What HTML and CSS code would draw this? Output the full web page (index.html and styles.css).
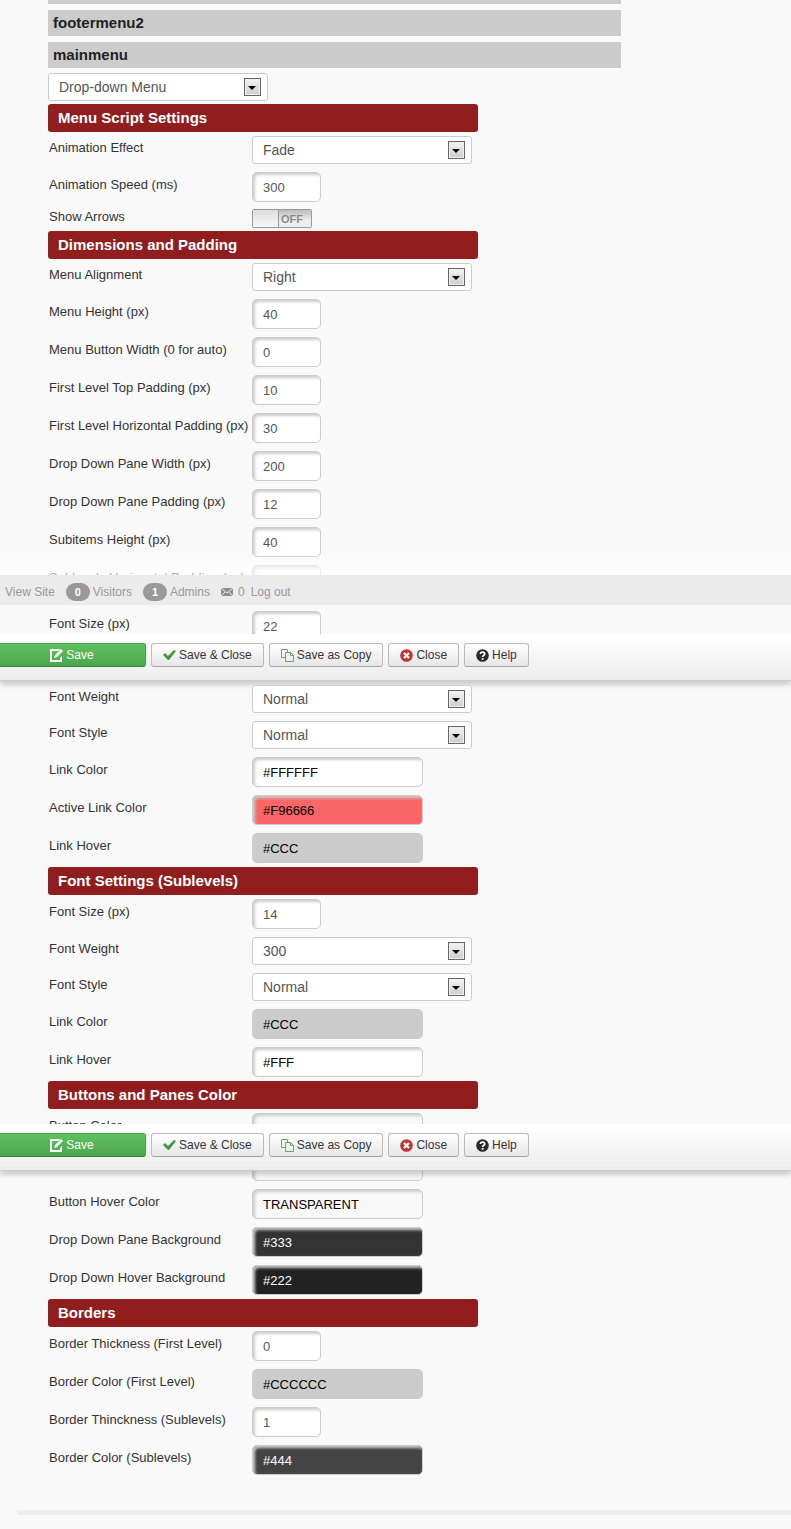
FILE: index.html
```
<!DOCTYPE html>
<html lang="en">
<head>
    <meta charset="UTF-8">
    <meta name="viewport" content="width=device-width, initial-scale=1.0">
    <title>Template Menu Settings</title>
    <link rel="stylesheet" href="styles.css">
</head>
<body>
    <!-- Icons shared by the toolbars -->
    <svg class="sprite" aria-hidden="true">
        <symbol id="icon-save" viewBox="0 0 13 13">
            <path d="M10 0H0v13h12V7l-2 2v2H2V2h6z" fill="#fff"/>
            <path d="M11 0l2 2-6 6-3 1 1-3z" fill="#fff"/>
        </symbol>
        <symbol id="icon-check" viewBox="0 0 13 13">
            <path d="M0 6l2-2 3 3 6-6 2 1-7 9H5z" fill="#409740"/>
        </symbol>
        <symbol id="icon-copy" viewBox="0 0 13 13">
            <path d="M4.500 8.500H.5v-8h6v3M4.500 3.500h5l3 3v6h-8zM9.500 3.500v3h3" fill="none" stroke="#5fae5f"/>
        </symbol>
        <symbol id="icon-close" viewBox="0 0 13 13">
            <circle cx="6.500" cy="6.500" r="6.300" fill="#bd362f"/>
            <path d="M4 4l5 5M9 4l-5 5" stroke="#fff" stroke-width="2.200"/>
        </symbol>
        <symbol id="icon-help" viewBox="0 0 13 13">
            <circle cx="6.500" cy="6.500" r="6.300" fill="#2a2a2a"/>
            <path d="M4.400 4.900C4.400 2.400 8.700 2.400 8.700 4.900 8.700 6.300 6.600 6.200 6.600 8M6.600 9v1.800" fill="none" stroke="#fff" stroke-width="1.700"/>
        </symbol>
    </svg>

    <!-- Menus -->
    <div class="pane">
        <div class="menu-list">
            <div class="menu-name menu-end"></div>
            <h2 class="menu-name">footermenu2</h2>
            <h2 class="menu-name">mainmenu</h2>
        </div>
        <span class="select"><select aria-label="Menu type"><option>Drop-down Menu</option></select></span>

        <h3 class="heading">Menu Script Settings</h3>
        <div class="row">
            <label for="effect">Animation Effect</label>
            <span class="select"><select id="effect"><option>Fade</option></select></span>
        </div>
        <div class="row text-row">
            <label for="speed">Animation Speed (ms)</label>
            <input type="text" id="speed" value="300">
        </div>
        <div class="row switch-row">
            <label for="arrows">Show Arrows</label>
            <span class="switch"><input type="checkbox" id="arrows"><span class="off">OFF</span></span>
        </div>

        <h3 class="heading">Dimensions and Padding</h3>
        <div class="row">
            <label for="align">Menu Alignment</label>
            <span class="select"><select id="align"><option>Right</option></select></span>
        </div>
        <div class="row text-row">
            <label for="height">Menu Height (px)</label>
            <input type="text" id="height" value="40">
        </div>
        <div class="row text-row">
            <label for="width">Menu Button Width (0 for auto)</label>
            <input type="text" id="width" value="0">
        </div>
        <div class="row text-row">
            <label for="top-pad">First Level Top Padding (px)</label>
            <input type="text" id="top-pad" value="10">
        </div>
        <div class="row text-row">
            <label for="hor-pad">First Level Horizontal Padding (px)</label>
            <input type="text" id="hor-pad" value="30">
        </div>
        <div class="row text-row">
            <label for="pane-width">Drop Down Pane Width (px)</label>
            <input type="text" id="pane-width" value="200">
        </div>
        <div class="row text-row">
            <label for="pane-pad">Drop Down Pane Padding (px)</label>
            <input type="text" id="pane-pad" value="12">
        </div>
        <div class="row text-row">
            <label for="sub-height">Subitems Height (px)</label>
            <input type="text" id="sub-height" value="40">
        </div>
        <div class="row text-row cut">
            <label for="sub-pad">Sublevels Horizontal Padding (px)</label>
            <input type="text" id="sub-pad" value="">
        </div>
    </div>

    <!-- Status bar -->
    <div class="status">
        <a href="#">View Site</a>
        <span class="count"><b class="badge">0</b>Visitors</span>
        <span class="count"><b class="badge">1</b>Admins</span>
        <a href="#" class="mail">
            <svg width="12" height="8" viewBox="0 0 12 8"><path d="M0 0h12v8H0z" fill="#8f8f8f"/><path d="M0 0l6 5 6-5M0 8l4-4M12 8L8 4" fill="none" stroke="#ebebeb"/></svg>
            0</a>
        <a href="#">Log out</a>
    </div>

    <div class="pane pane-size">
        <div class="row text-row cut cut-size">
            <label for="size1">Font Size (px)</label>
            <input type="text" id="size1" value="22">
        </div>
    </div>

    <!-- Toolbar -->
    <div class="toolbar">
        <button class="btn btn-save"><svg><use href="#icon-save"/></svg>Save</button>
        <button class="btn"><svg><use href="#icon-check"/></svg>Save &amp; Close</button>
        <button class="btn"><svg><use href="#icon-copy"/></svg>Save as Copy</button>
        <button class="btn"><svg><use href="#icon-close"/></svg>Close</button>
        <button class="btn"><svg><use href="#icon-help"/></svg>Help</button>
    </div>

    <!-- Fonts -->
    <div class="pane">
        <div class="row">
            <label for="weight1">Font Weight</label>
            <span class="select"><select id="weight1"><option>Normal</option></select></span>
        </div>
        <div class="row">
            <label for="style1">Font Style</label>
            <span class="select"><select id="style1"><option>Normal</option></select></span>
        </div>
        <div class="row text-row">
            <label for="link1">Link Color</label>
            <input type="text" id="link1" class="color white" value="#FFFFFF">
        </div>
        <div class="row text-row">
            <label for="active1">Active Link Color</label>
            <input type="text" id="active1" class="color red" value="#F96666">
        </div>
        <div class="row text-row">
            <label for="hover1">Link Hover</label>
            <input type="text" id="hover1" class="color gray" value="#CCC">
        </div>

        <h3 class="heading">Font Settings (Sublevels)</h3>
        <div class="row text-row">
            <label for="size2">Font Size (px)</label>
            <input type="text" id="size2" value="14">
        </div>
        <div class="row">
            <label for="weight2">Font Weight</label>
            <span class="select"><select id="weight2"><option>300</option></select></span>
        </div>
        <div class="row">
            <label for="style2">Font Style</label>
            <span class="select"><select id="style2"><option>Normal</option></select></span>
        </div>
        <div class="row text-row">
            <label for="link2">Link Color</label>
            <input type="text" id="link2" class="color gray" value="#CCC">
        </div>
        <div class="row text-row">
            <label for="hover2">Link Hover</label>
            <input type="text" id="hover2" class="color white" value="#FFF">
        </div>

        <h3 class="heading">Buttons and Panes Color</h3>
        <div class="row text-row cut cut-color">
            <label for="button-color">Button Color</label>
            <input type="text" id="button-color" class="color" value="TRANSPARENT">
        </div>
    </div>

    <!-- Toolbar -->
    <div class="toolbar">
        <button class="btn btn-save"><svg><use href="#icon-save"/></svg>Save</button>
        <button class="btn"><svg><use href="#icon-check"/></svg>Save &amp; Close</button>
        <button class="btn"><svg><use href="#icon-copy"/></svg>Save as Copy</button>
        <button class="btn"><svg><use href="#icon-close"/></svg>Close</button>
        <button class="btn"><svg><use href="#icon-help"/></svg>Help</button>
    </div>

    <!-- Panes and borders -->
    <div class="pane">
        <div class="row cut cut-top">
            <span></span>
            <input type="text" class="color" aria-label="Button color" value="">
        </div>
        <div class="row text-row">
            <label for="button-hover">Button Hover Color</label>
            <input type="text" id="button-hover" class="color" value="TRANSPARENT">
        </div>
        <div class="row text-row">
            <label for="pane-bg">Drop Down Pane Background</label>
            <input type="text" id="pane-bg" class="color dark" value="#333">
        </div>
        <div class="row text-row">
            <label for="hover-bg">Drop Down Hover Background</label>
            <input type="text" id="hover-bg" class="color darker" value="#222">
        </div>

        <h3 class="heading">Borders</h3>
        <div class="row text-row">
            <label for="border1">Border Thickness (First Level)</label>
            <input type="text" id="border1" value="0">
        </div>
        <div class="row text-row">
            <label for="border-color1">Border Color (First Level)</label>
            <input type="text" id="border-color1" class="color gray" value="#CCCCCC">
        </div>
        <div class="row text-row">
            <label for="border2">Border Thinckness (Sublevels)</label>
            <input type="text" id="border2" value="1">
        </div>
        <div class="row text-row">
            <label for="border-color2">Border Color (Sublevels)</label>
            <input type="text" id="border-color2" class="color charcoal" value="#444">
        </div>
    </div>
    <hr>
</body>
</html>
```
FILE: styles.css
```
*,
*::before,
*::after {
    box-sizing: border-box;
}
body {
    margin: 0;
    background: #f9f9f9;
    color: #333;
    font-family: "Liberation Sans", Arial, sans-serif;
    font-size: 13px;
    overflow-x: hidden;
}
.sprite {
    display: none;
}
a {
    color: inherit;
    text-decoration: none;
}
.pane {
    padding-left: 48px;
}

/* Menu names */
.menu-list {
    display: flex;
    flex-direction: column;
    gap: 6px;
    max-width: 573px;
    margin-bottom: 5px;
}
.menu-name {
    margin: 0;
    padding-left: 5px;
    background: #ccc;
    color: #222;
    font-size: 15px;
    line-height: 26px;
}
.menu-end {
    height: 4px;
}
.heading {
    max-width: 430px;
    margin: 0;
    padding-left: 10px;
    border-radius: 3px;
    background: #901e1e;
    color: #fff;
    font-size: 15px;
    line-height: 28px;
}
.menu-list + .select {
    margin-bottom: 3px;
}

/* Form rows */
.row {
    display: grid;
    grid-template-columns: 204px 1fr;
    align-items: start;
    padding: 4px 0;
}
.row label {
    padding-left: 1px;
    line-height: 24px;
    white-space: nowrap;
}
.text-row label {
    padding-top: 1px;
}
.switch-row {
    padding: 3px 0;
}
.switch-row label {
    line-height: 15px;
}
.cut {
    height: 14px;
    padding-bottom: 0;
    overflow: hidden;
}
.cut-size {
    height: 27px;
}
.cut-color {
    height: 15px;
}
.cut-top {
    align-content: end;
    padding: 0 0 4px;
}
.pane-size {
    padding-top: 2px;
}
input[type="text"] {
    width: 69px;
    height: 30px;
    padding: 0 10px;
    border: 1px solid #ccc;
    border-radius: 5px;
    background: #fff;
    box-shadow: inset 2px 2px 3px #ccc;
    color: #555;
    font: 13px "Liberation Sans", Arial, sans-serif;
}
input.color {
    width: 171px;
    background: #f9f9f9;
    color: #000;
}
input.white {
    background: #fff;
}
input.red {
    background: #f96666;
}
input.gray {
    background: #ccc;
}
input.dark {
    background: #333;
    color: #fff;
}
input.darker {
    background: #222;
    color: #fff;
}
input.charcoal {
    background: #444;
    color: #fff;
}

/* Select box with its own arrow button */
.select {
    display: block;
    position: relative;
    width: 220px;
    height: 28px;
}
.select select {
    width: 100%;
    height: 28px;
    padding: 0 30px 0 10px;
    border: 1px solid #ccc;
    border-radius: 3px;
    appearance: none;
    background: #fff;
    color: #555;
    font: 14px "Liberation Sans", Arial, sans-serif;
}
.select::before {
    content: "";
    position: absolute;
    top: 5px;
    right: 7px;
    width: 17px;
    height: 18px;
    border: 1px solid #666;
    background: linear-gradient(#f4f4f4, #ccc);
    box-shadow: inset 0 0 0 1px #eee;
    pointer-events: none;
}
.select::after {
    content: "";
    position: absolute;
    top: 13px;
    right: 12px;
    border: 4px solid transparent;
    border-top-color: #000;
    border-bottom: 0;
    pointer-events: none;
}

/* On / off switch */
.switch {
    display: flex;
    width: 60px;
    height: 19px;
    border: 1px solid #999;
    border-radius: 2px;
    overflow: hidden;
}
.switch input {
    appearance: none;
    width: 26px;
    margin: 0;
    border-right: 1px solid #999;
    background: linear-gradient(#ddd, #f9f9f9);
}
.switch .off {
    flex: 1;
    padding-left: 2px;
    background: linear-gradient(#bbb, #eee 60%);
    color: #8a8a8a;
    font-size: 11px;
    font-weight: bold;
    line-height: 18px;
}

/* Status bar */
.status {
    position: relative;
    display: flex;
    align-items: center;
    gap: 11px;
    height: 30px;
    padding: 2px 5px 0;
    border-top: 1px solid #ccc;
    background: #ebebeb;
    color: #999;
    font-size: 12px;
}
.status::before {
    content: "";
    position: absolute;
    right: 0;
    bottom: 100%;
    left: 0;
    height: 24px;
    background: linear-gradient(rgba(255, 255, 255, 0), rgba(255, 255, 255, 0.6) 60%);
}
.count {
    display: flex;
    align-items: center;
    gap: 3px;
}
.badge {
    width: 24px;
    border-radius: 9px;
    background: #999;
    color: #fff;
    font-size: 11px;
    line-height: 18px;
    text-align: center;
}
.mail {
    display: flex;
    align-items: center;
    gap: 5px;
    margin-right: -5px;
}

/* Toolbar */
.toolbar {
    position: relative;
    display: flex;
    gap: 5px;
    height: 47px;
    padding-top: 9px;
    border-bottom: 1px solid #ccc;
    background: linear-gradient(#fff, #ededed);
    box-shadow: 0 4px 5px rgba(0, 0, 0, 0.18);
}
.btn {
    display: flex;
    align-items: center;
    justify-content: center;
    gap: 3px;
    height: 24px;
    padding: 0 11px;
    border: 1px solid #bbb;
    border-bottom-color: #a2a2a2;
    border-radius: 3px;
    background: linear-gradient(#fff, #e6e6e6);
    color: #333;
    font: 12px "Liberation Sans", Arial, sans-serif;
    white-space: nowrap;
}
.btn svg {
    width: 13px;
    height: 13px;
}
.btn-save {
    width: 148px;
    margin-left: -2px;
    border-color: #46a546 #46a546 #378137;
    background: linear-gradient(#5fc160, #4ca64c);
    color: #fff;
}

hr {
    height: 5px;
    margin: 31px 0 14px 17px;
    border: 0;
    background: #eee;
}
```
